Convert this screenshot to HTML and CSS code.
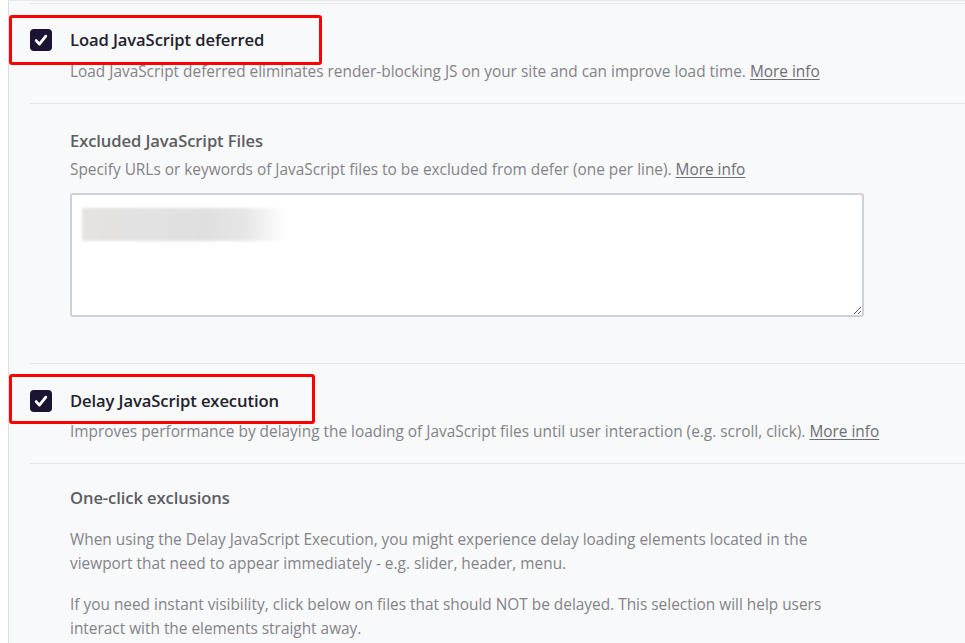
FILE: index.html
```html
<!DOCTYPE html>
<html lang="en">
<head>
<meta charset="utf-8">
<title>File Optimization</title>
<link rel="stylesheet" href="styles.css">
</head>
<body>
<div class="page">
  <div class="panel">
    <div class="topline"></div>

    <section class="field field-main">
      <div class="check-row">
        <span class="checkbox"><svg viewBox="0 0 22 22" width="22" height="22"><path d="M6.2 11.6l3.2 3.5L15.8 7.2" fill="none" stroke="#fff" stroke-width="2.8" stroke-linecap="round" stroke-linejoin="round"/></svg></span>
        <span class="check-title">Load JavaScript deferred</span>
        <span class="mark mark-1"></span>
      </div>
      <p class="desc">Load JavaScript deferred eliminates render-blocking JS on your site and can improve load time. <a href="#" class="more">More info</a></p>
    </section>

    <section class="field field-sub field-excluded">
      <h3 class="sub-title">Excluded JavaScript Files</h3>
      <p class="desc desc-tight">Specify URLs or keywords of JavaScript files to be excluded from defer (one per line). <a href="#" class="more">More info</a></p>
      <div class="area-wrap">
        <textarea class="area"></textarea>
        <span class="blurred"></span>
      </div>
    </section>

    <section class="field field-main field-delay">
      <div class="check-row">
        <span class="checkbox"><svg viewBox="0 0 22 22" width="22" height="22"><path d="M6.2 11.6l3.2 3.5L15.8 7.2" fill="none" stroke="#fff" stroke-width="2.8" stroke-linecap="round" stroke-linejoin="round"/></svg></span>
        <span class="check-title">Delay JavaScript execution</span>
        <span class="mark mark-2"></span>
      </div>
      <p class="desc desc-delay">Improves performance by delaying the loading of JavaScript files until user interaction (e.g. scroll, click). <a href="#" class="more">More info</a></p>
    </section>

    <section class="field field-sub field-oneclick">
      <h3 class="sub-title">One-click exclusions</h3>
      <p class="para">When using the Delay JavaScript Execution, you might experience delay loading elements located in the viewport that need to appear immediately - e.g. slider, header, menu.</p>
      <p class="para">If you need instant visibility, click below on files that should NOT be delayed. This selection will help users interact with the elements straight away.</p>
    </section>
  </div>
</div>
</body>
</html>
```

FILE: styles.css
```css
* { box-sizing: border-box; }

html, body {
  margin: 0;
  padding: 0;
  background: #ffffff;
}

body {
  font-family: "Open Sans", "Noto Sans", "Liberation Sans", sans-serif;
  color: #7d7d82;
  height: 643px;
  overflow: hidden;
}

.page {
  padding-left: 8px;
  height: 100%;
}

.panel {
  height: 100%;
  background: #f8f9fb;
  border-left: 1px solid #dcdde0;
  border-top: 1px solid #e6e7ea;
  padding-top: 2px;
}

.topline {
  margin-left: 21px;
  border-top: 1px solid #e3e5e8;
}

.field {
  margin-left: 21px;
  border-bottom: 1px solid #e3e5e8;
}

.field-main {
  padding: 24px 0 19px 0;
}

.field-delay {
  padding: 25px 0 19px 0;
}

.field-sub {
  padding-left: 40px;
}

.field-excluded {
  padding-top: 25px;
  padding-bottom: 46px;
}

.field-oneclick {
  border-bottom: none;
  padding-top: 22px;
}

.check-row {
  position: relative;
  display: flex;
  align-items: center;
  gap: 18px;
  height: 24px;
}

.checkbox {
  flex: none;
  width: 22px;
  height: 22px;
  border-radius: 4px;
  background: #1c1433;
  display: flex;
}

.check-title {
  font-size: 16.6px;
  font-weight: 600;
  color: #23222c;
  line-height: 24px;
  letter-spacing: -0.1px;
}

.mark {
  position: absolute;
  border: 3px solid #ff0000;
  border-radius: 3px;
  pointer-events: none;
}

.mark-1 {
  left: -21px;
  top: -13px;
  width: 313px;
  height: 50px;
}

.mark-2 {
  left: -21px;
  top: -15px;
  width: 306px;
  height: 50px;
}

.desc {
  margin: 8px 0 0 40px;
  font-size: 15.4px;
  line-height: 24px;
  color: #838388;
}

.desc-delay {
  margin-top: 7px;
}

.field-sub .desc {
  margin-left: 0;
}

.desc-tight {
  margin-top: 5px !important;
}

.more {
  color: #6e6e73;
  text-decoration: underline;
  text-underline-offset: 2px;
}

.sub-title {
  margin: 0;
  font-size: 16.6px;
  font-weight: 600;
  line-height: 24px;
  color: #5d5d62;
  letter-spacing: -0.1px;
}

.area-wrap {
  position: relative;
  margin-top: 11px;
  width: 794px;
  height: 124px;
}

.area {
  display: block;
  width: 100%;
  height: 100%;
  border: 2px solid #cdd2d9;
  border-radius: 3px;
  background: #ffffff;
  resize: vertical;
  font-family: inherit;
  outline: none;
}

.blurred {
  position: absolute;
  left: 12px;
  top: 15px;
  width: 204px;
  height: 33px;
  background: linear-gradient(to right, #e6e2de 0%, #e2e2e2 20%, #dfdfdf 60%, #e6e6e6 80%, #ffffff 100%);
  filter: blur(1.5px);
}

.para {
  margin: 18px 0 0 0;
  font-size: 15.4px;
  line-height: 24px;
  color: #838388;
  max-width: 770px;
}

.para + .para {
  margin-top: 17px;
}
```
